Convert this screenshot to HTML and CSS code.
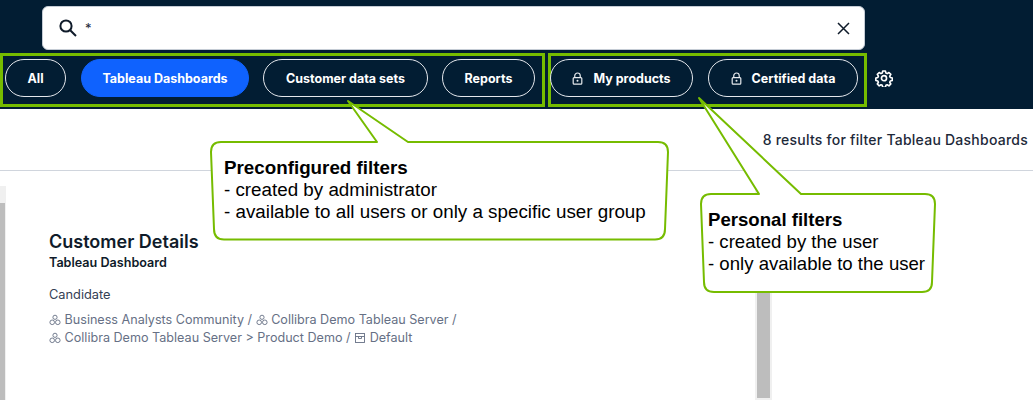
FILE: index.html
```html
<!DOCTYPE html>
<html lang="en">
<head>
<meta charset="utf-8">
<title>Search filters</title>
<link rel="stylesheet" href="styles.css">
</head>
<body>
<div class="page">
  <header class="top">
    <div class="search">
      <svg class="search-icon" viewBox="0 0 20 20" width="20" height="20"><circle cx="8" cy="8" r="5.6" fill="none" stroke="#0f1b2a" stroke-width="2"/><path d="M12.2 12.2 18 18" fill="none" stroke="#0f1b2a" stroke-width="2"/></svg>
      <span class="query">*</span>
      <svg class="clear-icon" viewBox="0 0 14 14" width="14" height="14"><path d="M2 2 13 13M13 2 2 13" fill="none" stroke="#0f1b2a" stroke-width="1.5"/></svg>
    </div>
    <div class="filters">
      <div class="group group-a">
        <button class="pill pill-all">All</button>
        <button class="pill pill-on">Tableau Dashboards</button>
        <button class="pill pill-data">Customer data sets</button>
        <button class="pill pill-rep">Reports</button>
      </div>
      <div class="group group-b">
        <button class="pill pill-my">
          <svg class="lock" viewBox="0 0 12 14" width="11" height="13"><path d="M3 6.5V4a3 3 0 0 1 6 0v2.500" fill="none" stroke="#e8ebef" stroke-width="1.300"/><rect x="1.300" y="6.100" width="9.400" height="7" rx="1" fill="none" stroke="#e8ebef" stroke-width="1.300"/><circle cx="6" cy="9.500" r="1.100" fill="#e8ebef"/></svg>
          My products
        </button>
        <button class="pill pill-cert">
          <svg class="lock" viewBox="0 0 12 14" width="11" height="13"><path d="M3 6.5V4a3 3 0 0 1 6 0v2.500" fill="none" stroke="#e8ebef" stroke-width="1.300"/><rect x="1.300" y="6.100" width="9.400" height="7" rx="1" fill="none" stroke="#e8ebef" stroke-width="1.300"/><circle cx="6" cy="9.500" r="1.100" fill="#e8ebef"/></svg>
          Certified data
        </button>
      </div>
      <svg class="gear" viewBox="0 0 24 24" width="18" height="18"><path d="M10 1.800h4l.7 3 1.900.8 2.600-1.600 2.800 2.800-1.600 2.600.8 1.900 3 .7v3.800l-3 .7-.8 1.900 1.600 2.600-2.800 2.800-2.600-1.600-1.900.8-.7 2.900h-4l-.7-2.900-1.900-.8-2.600 1.600-2.800-2.800 1.600-2.600-.8-1.900-3-.7v-3.800l3-.7.800-1.900-1.600-2.600 2.800-2.800 2.600 1.600 1.900-.8z" transform="translate(1.300 1.100) scale(.9)" fill="none" stroke="#fff" stroke-width="2.400" stroke-linejoin="round"/><circle cx="12" cy="12.300" r="3.400" fill="none" stroke="#fff" stroke-width="2.200"/></svg>
    </div>
  </header>

  <div class="results"><span>8 results for filter Tableau Dashboards</span></div>

  <main class="body">
    <div class="scroll-left"><div class="thumb-left"></div></div>
    <section class="card">
      <h2 class="card-title">Customer Details</h2>
      <div class="card-type">Tableau Dashboard</div>
      <div class="card-status">Candidate</div>
      <div class="crumbs">
        <svg class="crumb-icon" viewBox="0 0 12 12" width="12" height="12"><g fill="none" stroke="#667085" stroke-width=".9"><circle cx="6" cy="3.300" r="2.100"/><circle cx="3.200" cy="8.300" r="2.300"/><circle cx="8.800" cy="8.300" r="2.300"/></g></svg>
        Business Analysts Community /
        <svg class="crumb-icon" viewBox="0 0 12 12" width="12" height="12"><g fill="none" stroke="#667085" stroke-width=".9"><circle cx="6" cy="3.300" r="2.100"/><circle cx="3.200" cy="8.300" r="2.300"/><circle cx="8.800" cy="8.300" r="2.300"/></g></svg>
        Collibra Demo Tableau Server /<br>
        <svg class="crumb-icon" viewBox="0 0 12 12" width="12" height="12"><g fill="none" stroke="#667085" stroke-width=".9"><circle cx="6" cy="3.300" r="2.100"/><circle cx="3.200" cy="8.300" r="2.300"/><circle cx="8.800" cy="8.300" r="2.300"/></g></svg>
        Collibra Demo Tableau Server &gt; Product Demo /
        <svg class="crumb-icon" viewBox="0 0 12 12" width="12" height="12"><g fill="none" stroke="#667085" stroke-width=".9"><rect x="1.500" y="1.500" width="9" height="9"/><path d="M1.500 4.500h9M4.500 4.500v2h3v-2"/></g></svg>
        Default
      </div>
    </section>
    <div class="scroll-right"><div class="thumb-right"></div></div>
  </main>

  <svg class="callouts" viewBox="0 0 1033 400" width="1033" height="400">
    <path class="callout" d="M221 142H377L348 101 408 142H658Q668 142 668 152L665 229Q665 239.500 655 239.500H224Q214 239.500 214 229L211 152Q211 142 221 142Z"/>
    <path class="callout" d="M711 194H759L699 98 801 194H925Q935 194 935 204L932 282Q932 292 922 292H714Q704 292 704 282L701 204Q701 194 711 194Z"/>
  </svg>
  <div class="note note-a">
    <strong>Preconfigured filters</strong><br>- created by administrator<br>- available to all users or only a specific user group
  </div>
  <div class="note note-b">
    <strong>Personal filters</strong><br>- created by the user<br>- only available to the user
  </div>
</div>
</body>
</html>
```
FILE: styles.css
```css
* { box-sizing: border-box; }
html, body { margin: 0; padding: 0; background: #fff; }
.page { position: relative; width: 1033px; height: 400px; overflow: hidden; font-family: Inter, "Liberation Sans", sans-serif; }

.top { height: 109px; background: #021d33; padding-top: 6px; }
.search { display: flex; align-items: center; width: 823px; height: 44px; margin-left: 42px; background: #fff; border: 1px solid #c5ccd5; border-radius: 6px; padding: 0 14px 0 15px; }
.search-icon { flex: none; }
.query { flex: 1; margin-left: 7px; font-size: 13px; color: #1d2939; }
.clear-icon { flex: none; }

.filters { display: flex; align-items: flex-start; margin-top: 3px; }
.group { display: flex; height: 54px; border: 3px solid #76bc00; padding-top: 3px; }
.group-a { width: 545px; padding-left: 2px; margin-right: 3px; }
.group-b { width: 319px; }
.pill { display: flex; align-items: center; justify-content: center; flex: none; height: 38px; border: 1px solid #e4e7ec; border-radius: 19px; background: transparent; color: #fff; font-family: inherit; font-size: 12.5px; font-weight: 700; padding: 0; white-space: nowrap; }
.pill-all { width: 61px; margin-right: 15px; }
.pill-on { width: 168px; margin-right: 14px; background: #0f62fe; border-color: #0f62fe; }
.pill-data { width: 165px; margin-right: 14px; }
.pill-rep { width: 93px; }
.pill-my { width: 143px; margin-right: 15px; margin-left: -1px; }
.pill-cert { width: 150px; }
.lock { margin-right: 10px; }
.gear { flex: none; margin: 16px 0 0 8px; }

.results { display: flex; align-items: center; justify-content: flex-end; height: 62px; padding: 0 5px 0 0; border-bottom: 1px solid #d0d5dd; font-size: 14px; font-weight: 500; letter-spacing: .24px; color: #1d2939; }

.body { display: flex; height: 229px; padding-top: 15px; }
.scroll-left { flex: none; width: 6px; background: #f0f0f0; padding-top: 17px; }
.thumb-left { width: 5px; height: 100%; background: #bdbdbd; }
.card { flex: none; width: 749px; padding: 46px 0 0 43px; color: #0f1b2a; }
.card-title { margin: 0; font-size: 18px; line-height: 20px; font-weight: 600; }
.card-type { margin-top: 2px; font-size: 12.6px; line-height: 18px; font-weight: 600; }
.card-status { margin-top: 14px; font-size: 12.8px; line-height: 18px; color: #344054; }
.crumbs { margin-top: 7px; font-size: 12.6px; line-height: 18px; color: #667085; }
.crumb-icon { vertical-align: -2px; }
.scroll-right { flex: none; width: 17px; background: #f0f0f0; padding: 0 2px 2px; }
.thumb-right { width: 13px; height: 100%; background: #bdbdbd; }

.callouts { position: absolute; left: 0; top: 0; pointer-events: none; }
.callout { fill: #fff; stroke: #76bc00; stroke-width: 2; stroke-linejoin: round; }
.note { position: absolute; font-family: "Liberation Sans", Arial, sans-serif; font-size: 18.8px; line-height: 22px; color: #000; white-space: nowrap; }
.note-a { left: 224px; top: 157px; }
.note-b { left: 708px; top: 209px; font-size: 18.6px; }
```
